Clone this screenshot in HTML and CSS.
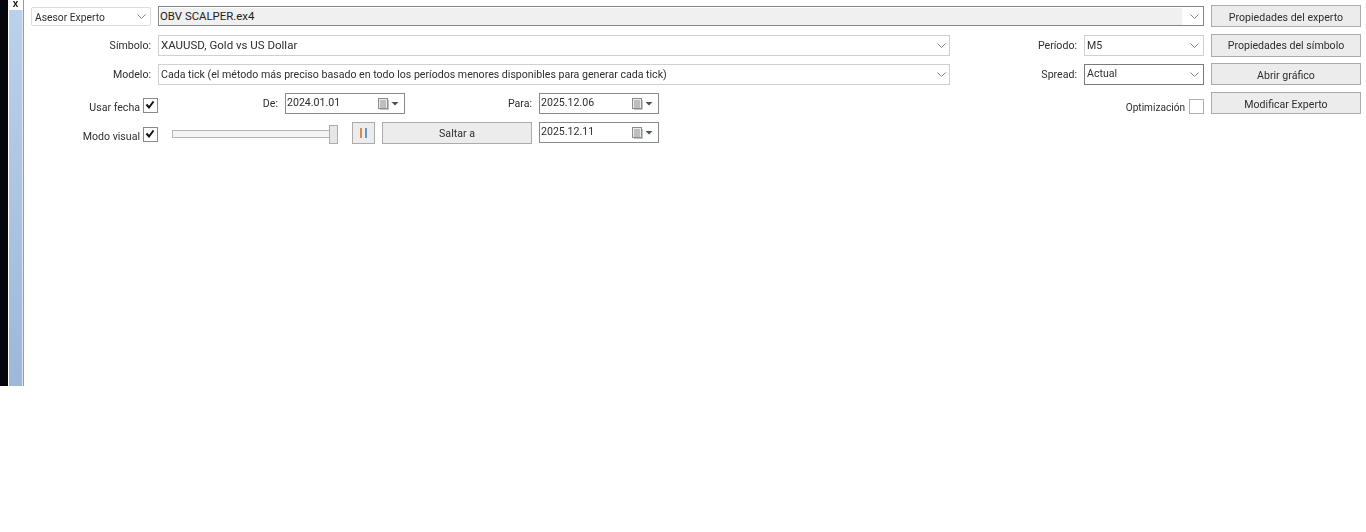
FILE: index.html
```html
<!DOCTYPE html>
<html lang="es">
<head>
<meta charset="utf-8">
<title>Probador de estrategias</title>
<link rel="stylesheet" href="styles.css">
</head>
<body>
<svg class="defs" width="0" height="0" aria-hidden="true">
  <symbol id="chev" viewBox="0 0 9 5"><path d="M.5.5 4.500 4.500 8.500.5" fill="none" stroke="#858585" stroke-width="1"/></symbol>
  <symbol id="cal" viewBox="0 0 21 12">
    <rect x=".5" y=".5" width="9" height="10" fill="#ececec" stroke="#8c8c8c"/>
    <path d="M2 3h6M2 5h6M2 7h6M2 9h6M3 2v8M5 2v8M7 2v8" stroke="#a5a5a5" stroke-width=".8" fill="none"/>
    <path d="M10.500 2v9.500H2" stroke="#c4c4c4" fill="none"/>
    <path d="M13.500 4h7L17 7.500z" fill="#44546a"/>
  </symbol>
  <symbol id="tick" viewBox="0 0 13 13"><path d="M2.500 5.500 5 8.500 9.500 2.500" fill="none" stroke="#111" stroke-width="2"/></symbol>
</svg>
<div class="window">
  <div class="rail">
    <div class="rail-black"></div>
    <div class="rail-blue"><span class="close">x</span></div>
  </div>
  <main class="panel">
    <div class="row">
      <div class="combo w-type first"><span class="val">Asesor Experto</span><svg class="chev"><use href="#chev"/></svg></div>
      <div class="combo w-ea ea"><span class="val ea-val">OBV SCALPER.ex4</span><svg class="chev"><use href="#chev"/></svg></div>
      <button class="btn w-btn">Propiedades del experto</button>
    </div>
    <div class="row">
      <label class="lbl w-type">Símbolo:</label>
      <div class="combo w-main soft"><span class="val big">XAUUSD, Gold vs US Dollar</span><svg class="chev"><use href="#chev"/></svg></div>
      <label class="lbl w-side">Período:</label>
      <div class="combo w-type soft"><span class="val">M5</span><svg class="chev"><use href="#chev"/></svg></div>
      <button class="btn w-btn tall">Propiedades del símbolo</button>
    </div>
    <div class="row">
      <label class="lbl w-type">Modelo:</label>
      <div class="combo w-main soft"><span class="val">Cada tick (el método más preciso basado en todo los períodos menores disponibles para generar cada tick)</span><svg class="chev"><use href="#chev"/></svg></div>
      <label class="lbl w-side">Spread:</label>
      <div class="combo w-type dark"><span class="val">Actual</span><svg class="chev"><use href="#chev"/></svg></div>
      <button class="btn w-btn">Abrir gráfico</button>
    </div>
    <div class="row">
      <label class="lbl w-check low">Usar fecha</label>
      <span class="check"><svg class="tick"><use href="#tick"/></svg></span>
      <label class="lbl w-de">De:</label>
      <div class="date"><span class="val">2024.01.01</span><svg class="cal"><use href="#cal"/></svg></div>
      <label class="lbl w-para">Para:</label>
      <div class="date"><span class="val">2025.12.06</span><svg class="cal"><use href="#cal"/></svg></div>
      <label class="lbl w-opt low narrow">Optimización</label>
      <span class="check opt"></span>
      <button class="btn w-btn">Modificar Experto</button>
    </div>
    <div class="row">
      <label class="lbl w-check low">Modo visual</label>
      <span class="check"><svg class="tick"><use href="#tick"/></svg></span>
      <div class="slider"><span class="thumb"></span></div>
      <button class="pause"><i class="pbar"></i><i class="pbar"></i></button>
      <button class="btn w-jump">Saltar a</button>
      <div class="date"><span class="val">2025.12.11</span><svg class="cal"><use href="#cal"/></svg></div>
    </div>
  </main>
</div>
</body>
</html>
```
FILE: styles.css
```css
* { box-sizing: border-box; }
html, body { margin: 0; padding: 0; background: #fff; }
body { width: 1366px; height: 532px; overflow: hidden; font: 10.6px/15px Roboto, "Liberation Sans", sans-serif; color: #2e2e2e; }
.defs { position: absolute; }
.window { display: flex; height: 386px; filter: blur(.25px); }
.rail { display: flex; width: 24px; flex: none; }
.rail-black { width: 8px; background: #05050d; }
.rail-blue { position: relative; width: 15px; margin-left: 1px; background: linear-gradient(#bcd2ec, #9cb8da); border-right: 1px solid #9a9a9a; box-shadow: inset -1px 0 #dfe8f2; }
.close { display: block; height: 10px; padding-right: 1px; background: #fff; font: bold 10px/7px "Liberation Sans", sans-serif; text-align: center; color: #111; }
.panel { flex: 1; padding: 5px 0 0 7px; display: flex; flex-direction: column; gap: 7px; }
.row { display: flex; align-items: flex-start; height: 22px; }
.combo, .date { display: flex; align-items: center; height: 21px; margin-top: 1px; border: 1px solid #d0d0d0; background: #fff; padding: 0 4px 0 2px; }
.val { flex: 1; white-space: nowrap; }
.big { font-size: 11.5px; }
.chev { width: 9px; height: 5px; flex: none; }
.w-type { width: 120px; flex: none; }
.first { height: 19px; margin-top: 2px; padding-left: 3px; border-color: #dcdcdc; border-radius: 2px; font-size: 10.3px; }
.first .val { padding-top: 1px; }
.w-ea { width: 1046px; margin-left: 7px; flex: none; }
.w-main { width: 792px; margin-left: 7px; flex: none; padding-right: 3px; }
.ea { height: 20px; border-color: #858585; padding: 0 4px 0 1px; }
.ea-val { background: #f0f0f0; height: 17px; margin-right: 8px; line-height: 15px; padding-top: 1px; color: #222; font-size: 11.4px; }
.dark { border-color: #7a7a7a; }
.dark .val { position: relative; top: -1px; }
.btn { height: 22px; background: #ececec; border: 1px solid #ababab; font: inherit; color: #2e2e2e; padding: 2px 0 0; }
.tall { height: 23px; padding-top: 0; }
.w-btn { width: 150px; margin-left: 7px; flex: none; }
.lbl { text-align: right; flex: none; line-height: 24px; }
.low { margin-top: 4px; }
.narrow { font-size: 10.1px; }
.w-side { width: 127px; }
.row .lbl.w-type + .combo { margin-left: 7px; }
.w-side + .combo { margin-left: 7px; }
.w-check { width: 109px; }
.check { display: block; width: 15px; height: 15px; margin: 6px 0 0 3px; border: 1px solid #8a8a8a; background: #fff; flex: none; }
.tick { display: block; width: 13px; height: 13px; }
.w-de { width: 120px; }
.date { width: 120px; margin-left: 7px; flex: none; border-color: #8a8a8a; padding: 0 5px 2px 1px; }
.cal { width: 21px; height: 12px; flex: none; margin-top: 2px; }
.w-para { width: 127px; }
.w-opt { width: 526px; }
.opt { margin: 7px 0 0 4px; border-color: #b0b0b0; }
.slider { position: relative; width: 166px; height: 8px; margin: 9px 0 0 14px; border: 1px solid #b5b5b5; background: #f4f4f4; }
.thumb { position: absolute; right: -1px; top: -6px; width: 9px; height: 19px; background: #e6e6e6; border: 1px solid #acacac; }
.pause { display: flex; align-items: center; justify-content: center; gap: 3px; width: 23px; height: 22px; margin: 1px 0 0 14px; background: #ececec; border: 1px solid #ababab; padding: 0; }
.pbar { display: block; width: 2px; height: 10px; background: #d98b4a; }
.pbar + .pbar { background: #6d93bf; }
.w-jump { width: 150px; margin: 1px 0 0 7px; flex: none; padding-top: 0; }
.w-jump + .date { margin-left: 7px; }
```
